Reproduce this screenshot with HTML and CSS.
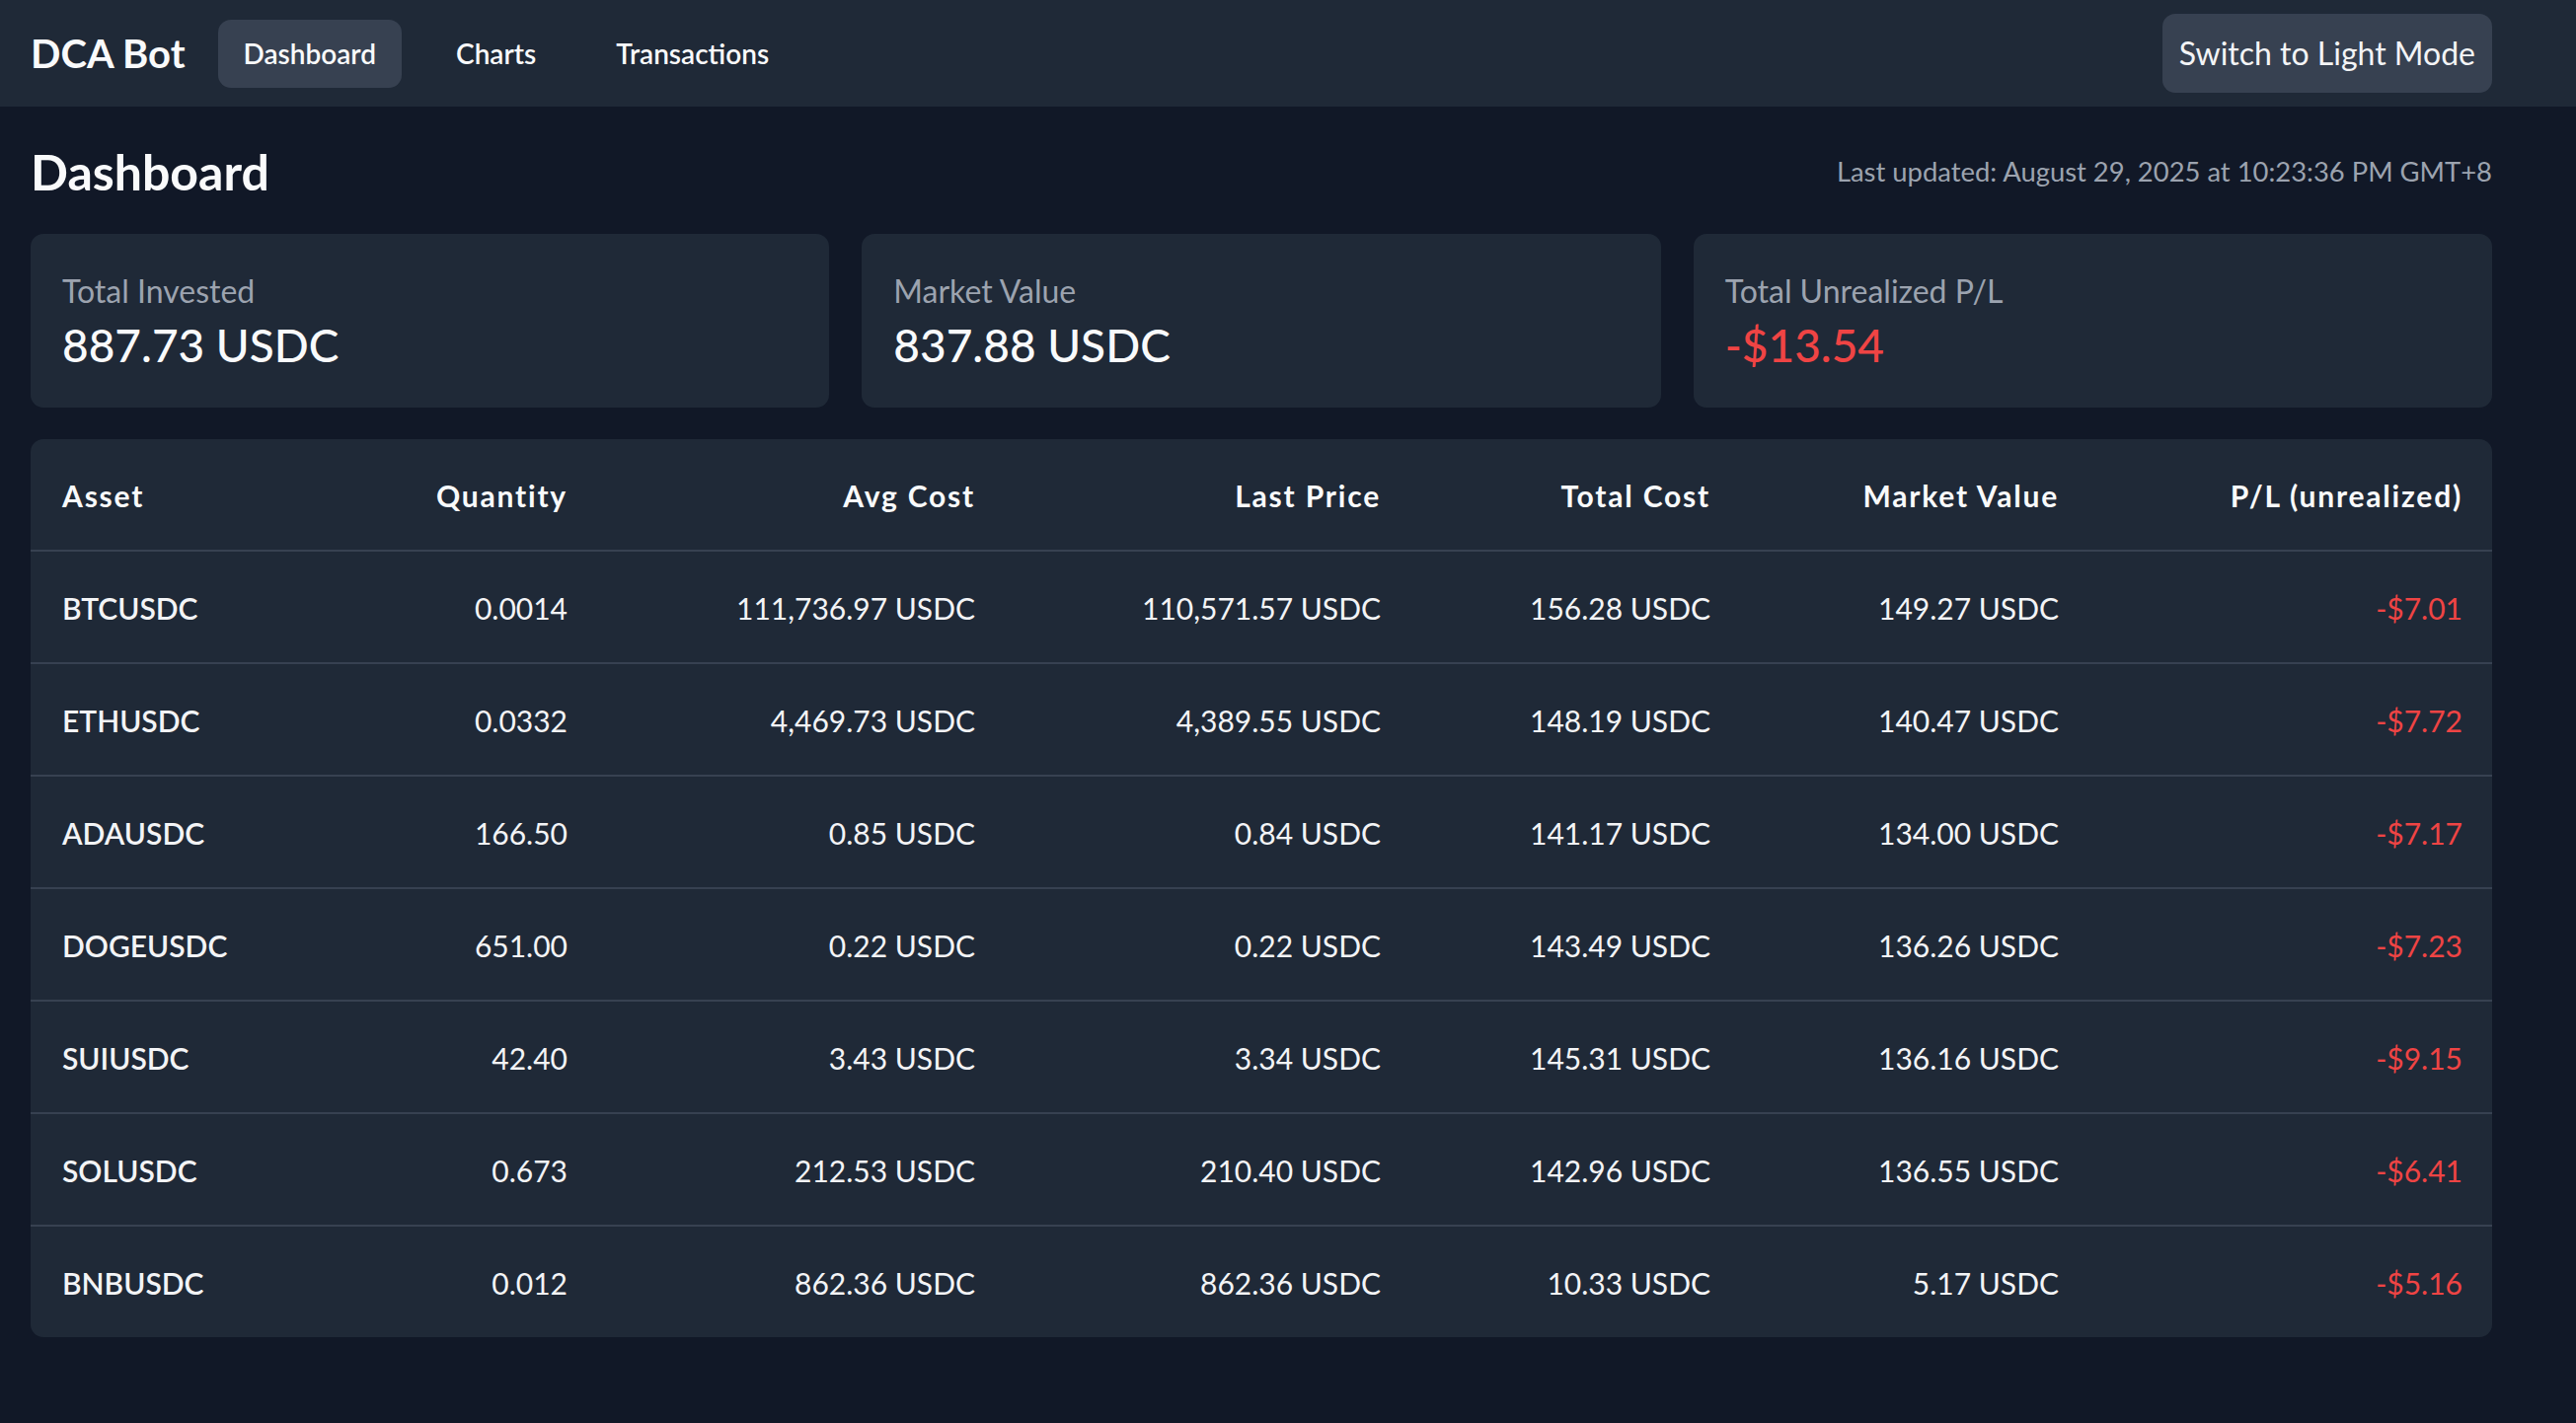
FILE: index.html
```
<!DOCTYPE html>
<html lang="en">
<head>
<meta charset="utf-8">
<title>DCA Bot</title>
<link rel="stylesheet" href="styles.css">
</head>
<body>
<header class="navbar">
  <div class="nav-left">
    <span class="brand">DCA Bot</span>
    <nav class="nav-links">
      <a class="nav-link active" href="#">Dashboard</a>
      <a class="nav-link" href="#">Charts</a>
      <a class="nav-link" href="#">Transactions</a>
    </nav>
  </div>
  <button class="theme-btn" type="button">Switch to Light Mode</button>
</header>

<main class="main">
  <div class="title-row">
    <h1 class="page-title">Dashboard</h1>
    <span class="updated">Last updated: August 29, 2025 at 10:23:36 PM GMT+8</span>
  </div>

  <section class="cards">
    <div class="card">
      <div class="card-label">Total Invested</div>
      <div class="card-value">887.73 USDC</div>
    </div>
    <div class="card">
      <div class="card-label">Market Value</div>
      <div class="card-value">837.88 USDC</div>
    </div>
    <div class="card">
      <div class="card-label">Total Unrealized P/L</div>
      <div class="card-value negative">-$13.54</div>
    </div>
  </section>

  <section class="table-card">
    <table class="holdings">
      <colgroup>
        <col class="c-asset"><col class="c-qty"><col class="c-avg"><col class="c-last"><col class="c-cost"><col class="c-mv"><col class="c-pl">
      </colgroup>
      <thead>
        <tr>
          <th class="left">Asset</th>
          <th>Quantity</th>
          <th>Avg Cost</th>
          <th>Last Price</th>
          <th>Total Cost</th>
          <th>Market Value</th>
          <th>P/L (unrealized)</th>
        </tr>
      </thead>
      <tbody>
        <tr><td class="asset">BTCUSDC</td><td>0.0014</td><td>111,736.97 USDC</td><td>110,571.57 USDC</td><td>156.28 USDC</td><td>149.27 USDC</td><td class="negative">-$7.01</td></tr>
        <tr><td class="asset">ETHUSDC</td><td>0.0332</td><td>4,469.73 USDC</td><td>4,389.55 USDC</td><td>148.19 USDC</td><td>140.47 USDC</td><td class="negative">-$7.72</td></tr>
        <tr><td class="asset">ADAUSDC</td><td>166.50</td><td>0.85 USDC</td><td>0.84 USDC</td><td>141.17 USDC</td><td>134.00 USDC</td><td class="negative">-$7.17</td></tr>
        <tr><td class="asset">DOGEUSDC</td><td>651.00</td><td>0.22 USDC</td><td>0.22 USDC</td><td>143.49 USDC</td><td>136.26 USDC</td><td class="negative">-$7.23</td></tr>
        <tr><td class="asset">SUIUSDC</td><td>42.40</td><td>3.43 USDC</td><td>3.34 USDC</td><td>145.31 USDC</td><td>136.16 USDC</td><td class="negative">-$9.15</td></tr>
        <tr><td class="asset">SOLUSDC</td><td>0.673</td><td>212.53 USDC</td><td>210.40 USDC</td><td>142.96 USDC</td><td>136.55 USDC</td><td class="negative">-$6.41</td></tr>
        <tr><td class="asset">BNBUSDC</td><td>0.012</td><td>862.36 USDC</td><td>862.36 USDC</td><td>10.33 USDC</td><td>5.17 USDC</td><td class="negative">-$5.16</td></tr>
      </tbody>
    </table>
  </section>
</main>
</body>
</html>
```

FILE: styles.css
```
* { box-sizing: border-box; }

html, body {
  margin: 0;
  padding: 0;
}

body {
  background: #111827;
  color: #f3f4f6;
  font-family: Lato, "Noto Sans", "Open Sans", sans-serif;
  min-height: 1442px;
}

.navbar {
  height: 108px;
  background: #1f2937;
  display: flex;
  align-items: center;
  justify-content: space-between;
  padding: 0 85px 0 31px;
}

.nav-left {
  display: flex;
  align-items: center;
  gap: 33px;
}

.brand {
  font-size: 40px;
  font-weight: 700;
  line-height: 53px;
  color: #f9fafb;
}

.nav-links {
  display: flex;
  align-items: center;
  gap: 29px;
}

.nav-link {
  display: block;
  padding: 14px 26px;
  font-size: 28px;
  line-height: 41px;
  font-weight: 600;
  color: #f9fafb;
  text-decoration: none;
  border-radius: 13px;
}

.nav-link.active {
  background: #374151;
}

.theme-btn {
  height: 80px;
  padding: 0 17px;
  background: #374151;
  color: #f3f4f6;
  border: none;
  border-radius: 13px;
  font-family: inherit;
  font-size: 32px;
  line-height: 46px;
}

.main {
  padding: 36px 85px 0 31px;
}

.title-row {
  display: flex;
  align-items: center;
  justify-content: space-between;
  margin-bottom: 33px;
}

.page-title {
  margin: 0;
  font-size: 50px;
  line-height: 60px;
  font-weight: 700;
  color: #f9fafb;
}

.updated {
  font-size: 27.4px;
  line-height: 40px;
  color: #9ca3af;
}

.cards {
  display: grid;
  grid-template-columns: repeat(3, 1fr);
  gap: 33px;
  margin-bottom: 32px;
}

.card {
  background: #1f2937;
  border-radius: 13px;
  padding: 33px 32px 0;
  height: 176px;
}

.card-label {
  font-size: 32px;
  line-height: 50px;
  color: #9ca3af;
}

.card-value {
  font-size: 46px;
  line-height: 60px;
  font-weight: 500;
  color: #f9fafb;
}

.negative {
  color: #ef4444;
}

.table-card {
  background: #1f2937;
  border-radius: 13px;
  overflow: hidden;
}

.holdings {
  width: 100%;
  border-collapse: collapse;
  table-layout: fixed;
}

.c-asset { width: 288px; }
.c-qty { width: 288px; }
.c-avg { width: 413px; }
.c-last { width: 411px; }
.c-cost { width: 334px; }
.c-mv { width: 353px; }
.c-pl { width: 409px; }

.holdings th,
.holdings td {
  padding: 34px 32px 32px;
  font-size: 30px;
  line-height: 46px;
  text-align: right;
  white-space: nowrap;
}

.holdings th {
  font-weight: 700;
  letter-spacing: 1.8px;
  color: #f9fafb;
  border-bottom: 2px solid #374151;
}

.holdings th.left,
.holdings td.asset {
  text-align: left;
}

.holdings td {
  color: #f3f4f6;
}

.holdings td.asset {
  font-weight: 600;
}

.holdings td.negative {
  color: #ef4444;
}

.holdings tbody tr + tr td {
  border-top: 2px solid #374151;
}
```
